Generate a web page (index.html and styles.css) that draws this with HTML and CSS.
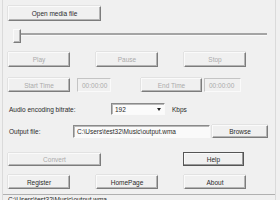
FILE: index.html
```html
<!DOCTYPE html>
<html>
<head>
<meta charset="utf-8">
<link rel="stylesheet" href="styles.css">
</head>
<body>
<div class="window">
  <div class="row r1">
    <div class="btn w93">Open media file</div>
  </div>
  <div class="row r2">
    <div class="slider">
      <div class="thumb"></div>
      <div class="track"></div>
    </div>
  </div>
  <div class="row r3">
    <div class="btn w62 dis">Play</div>
    <div class="btn w62 dis gap26">Pause</div>
    <div class="btn w62 dis gap26">Stop</div>
  </div>
  <div class="row r4">
    <div class="btn w62 dis">Start Time</div>
    <div class="field fdis t1">00:00:00</div>
    <div class="btn w61 dis e1">End Time</div>
    <div class="field fdis t2">00:00:00</div>
  </div>
  <div class="row r5">
    <div class="label l1">Audio encoding bitrate:</div>
    <div class="combo"><span class="cv">192</span><span class="arrow"></span></div>
    <div class="label kb">Kbps</div>
  </div>
  <div class="row r6">
    <div class="label l2">Output file:</div>
    <div class="field out">C:\Users\test32\Music\output.wma</div>
    <div class="btn browse">Browse</div>
  </div>
  <div class="row r7">
    <div class="btn w93 dis conv">Convert</div>
    <div class="btn w61 def">Help</div>
  </div>
  <div class="row r8">
    <div class="btn w62">Register</div>
    <div class="btn w62 gap26">HomePage</div>
    <div class="btn w62 gap26">About</div>
  </div>
  <div class="status">C:\Users\test32\Music\output.wma</div>
</div>
</body>
</html>
```
FILE: styles.css
```css
html, body {
  margin: 0;
  padding: 0;
  width: 280px;
  height: 200px;
  overflow: hidden;
  background: #f0f0f0;
}
body {
  font-family: "Liberation Sans", Arial, sans-serif;
  font-size: 6.5px;
  color: #2a2a2a;
}
.window {
  margin-left: 2px;
  width: 274px;
  height: 200px;
  border-left: 1px solid #dadada;
  border-right: 1px solid #dadada;
  padding-left: 5px;
  box-sizing: border-box;
  display: flex;
  flex-direction: column;
}
.row {
  display: flex;
  align-items: center;
  flex: none;
}
.r1 { margin-top: 6px; height: 15px; }
.r2 { margin-top: 8px; height: 14px; }
.r3 { margin-top: 9px; height: 15px; }
.r4 { margin-top: 11px; height: 14px; }
.r5 { margin-top: 11px; height: 12px; }
.r6 { margin-top: 10px; height: 13px; }
.r7 { margin-top: 14px; height: 14px; }
.r8 { margin-top: 9px; height: 14px; }

.btn {
  height: 100%;
  box-sizing: border-box;
  display: flex;
  align-items: center;
  justify-content: center;
  background: #f0f0f0;
  border: 1px solid;
  border-color: #fafafa #7c7c7c #7c7c7c #fafafa;
  box-shadow: inset -1px -1px 0 #b4b4b4, 0 -1px 0 #e2e2e2, -1px 0 0 #e2e2e2;
  white-space: nowrap;
}
.dis { color: #ababab; }
.w93 { width: 93px; }
.w62 { width: 62px; }
.w61 { width: 61px; }
.gap26 { margin-left: 26px; }

.slider {
  display: flex;
  align-items: center;
  height: 14px;
  margin-left: 5px;
}
.thumb {
  width: 8px;
  height: 14px;
  box-sizing: border-box;
  border: 1px solid;
  border-color: #fafafa #7c7c7c #7c7c7c #fafafa;
  box-shadow: inset -1px -1px 0 #b4b4b4;
  background: #f0f0f0;
}
.track {
  width: 246px;
  height: 2px;
  margin-top: -4px;
  background: #a4a4a4;
  border-bottom: 1px solid #fafafa;
}

.field {
  height: 100%;
  box-sizing: border-box;
  border: 1px solid;
  border-color: #8a8a8a #fafafa #fafafa #8a8a8a;
  box-shadow: inset 1px 1px 0 #b8b8b8;
  display: flex;
  align-items: center;
  padding-left: 4px;
  white-space: nowrap;
  overflow: hidden;
}
.fdis {
  color: #ababab;
  border-color: #c4c4c4 #fafafa #fafafa #c4c4c4;
  box-shadow: none;
}
.t1 { width: 34px; margin-left: 7px; }
.e1 { margin-left: 30px; }
.t2 { width: 37px; margin-left: 2px; }

.label { white-space: nowrap; }
.l1 { margin-left: 1px; width: 102px; }
.combo {
  width: 54px;
  height: 12px;
  box-sizing: border-box;
  border: 1px solid;
  border-color: #8a8a8a #fafafa #fafafa #8a8a8a;
  box-shadow: inset 1px 1px 0 #b8b8b8;
  background: #fbfbfb;
  display: flex;
  align-items: center;
  padding-left: 3px;
}
.cv { flex: 1; }
.arrow {
  width: 0;
  height: 0;
  margin-right: 3px;
  border-left: 2.5px solid transparent;
  border-right: 2.5px solid transparent;
  border-top: 3px solid #222;
}
.kb { margin-left: 7px; }

.l2 { margin-left: 1px; width: 64px; }
.out { width: 137px; background: #fafafa; padding-left: 3px; }
.browse { width: 56px; margin-left: 2px; height: 13px; }

.conv { height: 13px; margin-top: 1px; }
.def {
  margin-left: 82px;
  border-color: #555;
  box-shadow: inset -1px -1px 0 #999, inset 1px 1px 0 #fafafa;
}

.status {
  margin-top: 5px;
  margin-left: -5px;
  border-top: 1px solid #b0b0b0;
  padding-left: 5px;
  padding-top: 1px;
  line-height: 7px;
  white-space: nowrap;
}
```
